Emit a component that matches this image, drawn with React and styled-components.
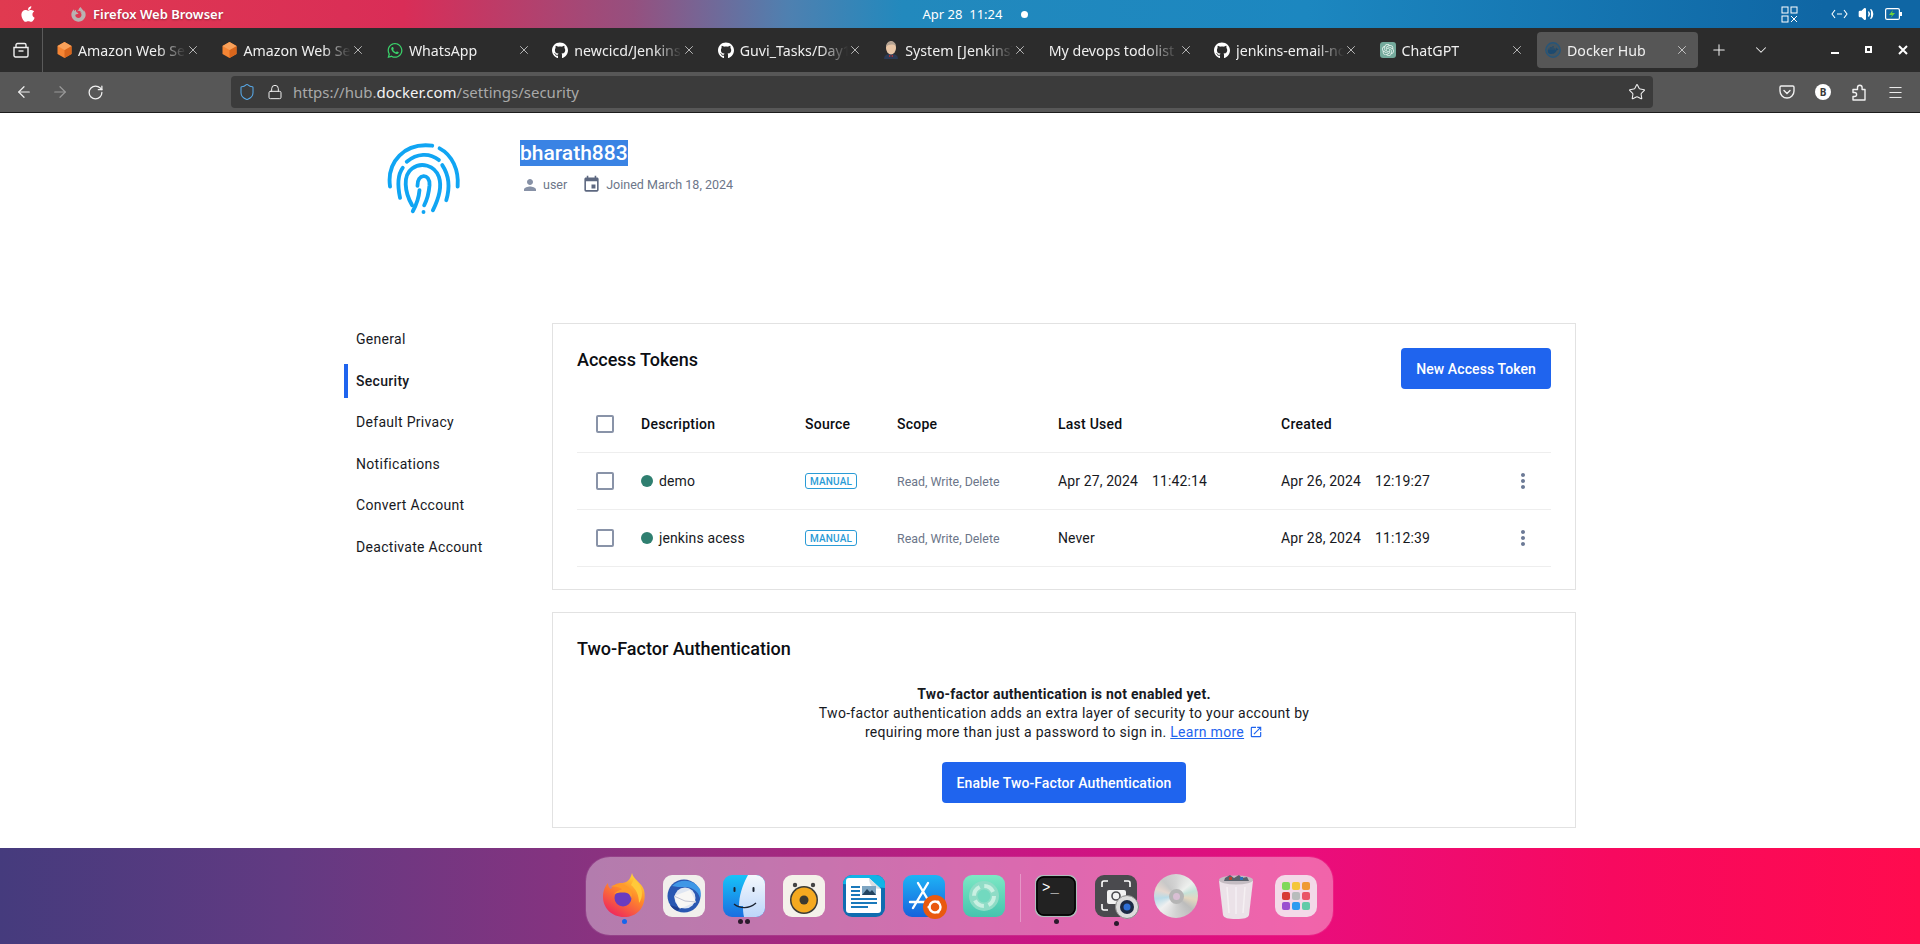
import React from "react";
import styled, { createGlobalStyle } from "styled-components";
import {
  ArrowLeft,
  ArrowRight,
  ChevronDown,
  Lock,
  Menu,
  Plus,
  RotateCw,
  Shield,
  Star,
  Volume2,
  X,
} from "lucide-react";
import { FaApple, FaFirefoxBrowser, FaGithub, FaWhatsapp } from "react-icons/fa";
import { MdEvent, MdMoreVert, MdOpenInNew, MdPerson } from "react-icons/md";
import { SiDocker, SiOpenai } from "react-icons/si";

const GlobalStyle = createGlobalStyle`
  html, body {
    margin: 0;
    padding: 0;
    height: 100%;
    overflow: hidden;
    background: #fff;
  }
  * { box-sizing: border-box; }
`;

const Screen = styled.div`
  width: 1920px;
  height: 944px;
  display: flex;
  flex-direction: column;
  overflow: hidden;
  font-family: Roboto, "Liberation Sans", sans-serif;
  color: #17191e;
`;

/* desktop top bar */
const TopBar = styled.div`
  height: 28px;
  flex: none;
  display: grid;
  grid-template-columns: 1fr auto 1fr;
  align-items: center;
  padding: 0 18px 0 19px;
  color: #fff;
  font-family: "Noto Sans", sans-serif;
  font-size: 13px;
  background: linear-gradient(
    90deg,
    #e03a50 0%,
    #d92d57 21%,
    #95507f 33%,
    #4f80b0 41%,
    #2289bd 47%,
    #1c87c0 68%,
    #0f66a4 95%
  );
`;

const TopLeft = styled.div`
  display: flex;
  align-items: center;
`;

const AppName = styled.span`
  margin-left: 7px;
  font-weight: 600;
  font-size: 13px;
  text-shadow: 0 1px 2px rgba(0, 0, 0, 0.3);
`;

const Clock = styled.div`
  display: flex;
  align-items: center;
  font-size: 13px;
  gap: 19px;
  margin-left: 30px;
`;

const ClockDot = styled.span`
  width: 7px;
  height: 7px;
  border-radius: 50%;
  background: #fff;
`;

const Tray = styled.div`
  display: flex;
  align-items: center;
  justify-content: flex-end;
`;

const TrayIcon = styled.span`
  display: flex;
  margin-left: ${(props) => props.$left || 0}px;
`;

/* tab strip */
const TabStrip = styled.div`
  height: 44px;
  flex: none;
  background: #2c2c2c;
  display: flex;
  align-items: center;
  color: #f0f0f0;
  font-family: "Noto Sans", sans-serif;
`;

const ViewButton = styled.div`
  width: 43px;
  height: 44px;
  flex: none;
  display: flex;
  align-items: center;
  justify-content: center;
  border-right: 1px solid #5a5a5a;
`;

const Tabs = styled.div`
  display: flex;
  gap: 4.44px;
  padding-left: 5px;
`;

const Tab = styled.div`
  width: 161px;
  height: 36px;
  flex: none;
  display: flex;
  align-items: center;
  padding: 0 9px 0 8px;
  border-radius: 4px;
  background: ${(props) => (props.$active ? "#565656" : "transparent")};
`;

const TabIcon = styled.span`
  width: 16px;
  height: 18px;
  flex: none;
  display: flex;
  align-items: center;
  justify-content: center;
  margin-right: 6px;
`;

const TabTitle = styled.span`
  flex: 1;
  min-width: 0;
  overflow: hidden;
  white-space: nowrap;
  font-size: 14.2px;
  -webkit-mask-image: linear-gradient(90deg, #000 74%, transparent 100%);
  mask-image: linear-gradient(90deg, #000 74%, transparent 100%);
`;

const StripButton = styled.span`
  display: flex;
  margin-left: ${(props) => props.$left}px;
`;

const WindowButtons = styled.div`
  margin-left: auto;
  display: flex;
  align-items: center;
  gap: 22px;
  padding-right: 11px;
`;

/* navigation bar */
const NavBar = styled.div`
  height: 41px;
  flex: none;
  background: #575757;
  border-bottom: 1px solid #1c1c1c;
  display: flex;
  align-items: center;
  color: #f0f0f0;
  font-family: "Noto Sans", sans-serif;
`;

const NavButtons = styled.div`
  width: 231px;
  flex: none;
  display: flex;
  align-items: center;
  gap: 18px;
  padding-left: 15px;
`;

const UrlBox = styled.div`
  width: 1422px;
  height: 32px;
  flex: none;
  background: #3b3b3b;
  border-radius: 4px;
  display: flex;
  align-items: center;
  padding: 0 7px 0 7px;
  font-size: 15px;
  color: #a9a9a9;
`;

const UrlHost = styled.span`
  color: #f4f4f4;
`;

const UrlText = styled.div`
  flex: 1;
  margin-left: 10px;
`;

const NavRight = styled.div`
  flex: 1;
  display: flex;
  align-items: center;
  justify-content: flex-end;
  gap: 20px;
  padding-right: 16px;
`;

const Avatar = styled.span`
  width: 16px;
  height: 16px;
  border-radius: 50%;
  background: #fff;
  color: #3a3a3a;
  font-size: 10px;
  font-weight: 700;
  display: flex;
  align-items: center;
  justify-content: center;
`;

/* page */
const Main = styled.main`
  height: 735px;
  flex: none;
  background: #fff;
  overflow: hidden;
`;

const Container = styled.div`
  width: 1232px;
  margin: 0 auto;
`;

const Profile = styled.header`
  height: 210px;
  display: flex;
  align-items: flex-start;
  padding: 27px 0 0 44px;
  gap: 57px;
`;

const ProfileText = styled.div`
  display: flex;
  flex-direction: column;
  align-items: flex-start;
`;

const UserName = styled.h1`
  margin: 0;
  font-size: 21px;
  line-height: 26px;
  font-weight: 500;
  background: #3a83e4;
  color: #fff;
`;

const MetaRow = styled.div`
  margin-top: 9px;
  display: flex;
  align-items: center;
  font-size: 12.5px;
  color: #6c7689;
`;

const MetaItem = styled.span`
  display: flex;
  align-items: center;
  gap: ${(props) => props.$gap}px;
  margin-right: 15px;
  margin-left: ${(props) => props.$left || 0}px;
`;

const Columns = styled.div`
  display: grid;
  grid-template-columns: 208px 1024px;
`;

const SideNav = styled.nav`
  display: flex;
  flex-direction: column;
  gap: 7.6px;
  margin-top: -1px;
`;

const SideItem = styled.div`
  height: 34px;
  display: flex;
  align-items: center;
  padding-left: ${(props) => (props.$active ? 8 : 12)}px;
  border-left: ${(props) => (props.$active ? "4px solid #1f64ee" : "none")};
  font-size: 14px;
  letter-spacing: 0.3px;
  font-weight: ${(props) => (props.$active ? 500 : 400)};
`;

const Cards = styled.div`
  display: flex;
  flex-direction: column;
  gap: 22px;
`;

const Card = styled.section`
  border: 1px solid #e2e2e2;
  padding: ${(props) => props.$padding};
`;

const CardHead = styled.div`
  display: flex;
  justify-content: space-between;
  align-items: flex-start;
`;

const CardTitle = styled.h2`
  margin: 0;
  font-size: 18px;
  line-height: 24px;
  font-weight: 500;
  color: #0b0d12;
`;

const BlueButton = styled.button`
  height: 41px;
  padding: 0 15px;
  border: none;
  border-radius: 4px;
  background: #1f64ee;
  color: #fff;
  font-family: Roboto, sans-serif;
  font-size: 14px;
  font-weight: 500;
  letter-spacing: 0.1px;
`;

const Row = styled.div`
  height: 57px;
  display: grid;
  grid-template-columns: 45px 164px 92px 161px 223px 1fr 56px;
  align-items: center;
  padding-left: 19px;
  border-bottom: 1px solid #eeeeee;
  font-size: 14px;
  letter-spacing: ${(props) => (props.$head ? 0.25 : 0.12)}px;
  font-weight: ${(props) => (props.$head ? 500 : 400)};
  color: ${(props) => (props.$head ? "#0b0d12" : "#17191e")};
`;

const TableHead = styled.div`
  margin-top: 7px;
`;

const Check = styled.span`
  width: 18px;
  height: 18px;
  border: 2px solid #8993a8;
  border-radius: 2px;
`;

const TokenName = styled.span`
  display: flex;
  align-items: center;
  gap: 6px;
`;

const StatusDot = styled.span`
  width: 12px;
  height: 12px;
  border-radius: 50%;
  background: #2f7f70;
`;

const Badge = styled.span`
  width: 52px;
  height: 16px;
  border: 1px solid #2a9bd6;
  border-radius: 3px;
  color: #2a9bd6;
  font-size: 10px;
  font-weight: 500;
  letter-spacing: 0.2px;
  display: flex;
  align-items: center;
  justify-content: center;
`;

const Scope = styled.span`
  font-size: 12.4px;
  letter-spacing: 0;
  color: #6c7689;
`;

const Stamp = styled.span`
  display: flex;
  gap: 14px;
`;

const Kebab = styled.span`
  display: flex;
  justify-content: center;
  color: #6c7a96;
`;

const TwoFactor = styled.div`
  margin-top: 24px;
  display: flex;
  flex-direction: column;
  align-items: center;
  text-align: center;
  font-size: 14px;
  line-height: 19px;
  letter-spacing: 0.3px;
`;

const Strong = styled.strong`
  font-weight: 700;
  letter-spacing: 0.25px;
`;

const LearnMore = styled.a`
  color: #1f64ee;
  text-decoration: underline;
`;

const EnableWrap = styled.div`
  margin-top: 20px;
`;

const ExternalIcon = styled(MdOpenInNew)`
  margin-left: 5px;
  vertical-align: -2px;
  color: #1f64ee;
`;

/* wallpaper and dock */
const Wallpaper = styled.footer`
  height: 96px;
  flex: none;
  padding: 9px 0 0 586px;
  background: linear-gradient(
    90deg,
    #453b7d 0%,
    #623a82 15%,
    #93307f 35%,
    #c91583 54%,
    #e90d7c 68%,
    #f7095f 84%,
    #ff0b4e 100%
  );
`;

const Dock = styled.div`
  width: 747px;
  height: 78px;
  display: flex;
  gap: 18px;
  padding: 18px 0 0 17px;
  border-radius: 24px;
  background: rgba(255, 255, 255, 0.36);
  box-shadow: 0 0 0 1px rgba(255, 255, 255, 0.08);
`;

const DockItem = styled.div`
  width: 42px;
  display: flex;
  flex-direction: column;
  align-items: center;
`;

const DockDots = styled.div`
  height: 6px;
  margin-top: 2px;
  display: flex;
  gap: 2px;
`;

const DockDot = styled.span`
  width: 5px;
  height: 5px;
  border-radius: 50%;
  background: ${(props) => (props.$blue ? "#1665ec" : "#2b1a2c")};
`;

const DockDivider = styled.div`
  width: 1px;
  height: 48px;
  margin: -1px -4px 0 -3px;
  background: rgba(255, 255, 255, 0.3);
`;

const CdIcon = styled.div`
  width: 44px;
  height: 44px;
  margin: -1px;
  border-radius: 50%;
  display: flex;
  align-items: center;
  justify-content: center;
  background: conic-gradient(
    #d4d4d4 0deg,
    #eef0ee 50deg,
    #c5e2d8 75deg,
    #e4d8c0 100deg,
    #bcbcbc 130deg,
    #d2d2d2 180deg,
    #f0f0f0 230deg,
    #b9dbe8 262deg,
    #e6d8d0 290deg,
    #c8c8c8 320deg,
    #d4d4d4 360deg
  );
`;

const CdHole = styled.div`
  width: 15px;
  height: 15px;
  border-radius: 50%;
  background: #d9bfd4;
  border: 4px solid #b5b5b5;
`;

const LaunchIcon = styled.div`
  width: 42px;
  height: 42px;
  padding: 7px;
  border-radius: 10px;
  background: #f3d9e8;
  display: grid;
  grid-template-columns: repeat(3, 1fr);
  gap: 2px;
`;

const LaunchCell = styled.span`
  border-radius: 2px;
  background: ${(props) => props.$color};
`;

/* drawn icons */
const CubeIcon = () => (
  <svg width="15" height="16" viewBox="0 0 14 16">
    <path d="M7 0l7 4v8l-7 4-7-4V4z" fill="#f58534" />
    <path d="M7 8l7-4v8l-7 4z" fill="#d9661c" />
    <path d="M7 0l7 4-7 4-7-4z" fill="#f9a15a" />
  </svg>
);

const JenkinsIcon = () => (
  <svg width="16" height="18" viewBox="0 0 16 18">
    <path d="M1 18c0-4 3-5 7-5s7 1 7 5z" fill="#2b3a55" />
    <ellipse cx="8" cy="7" rx="5" ry="6.5" fill="#e9c6a6" />
    <path d="M3 6c0-4 3-6 5-6s5 2 5 5c-3-2-7-2-10 1z" fill="#b4a292" />
    <path d="M6 14l2 1 2-1v2l-2-1-2 1z" fill="#c8302c" />
  </svg>
);

const ChatIcon = () => (
  <svg width="16" height="16" viewBox="0 0 16 16">
    <rect width="16" height="16" rx="3" fill="#74aa9c" />
    <SiOpenai x="2" y="2" size={12} color="#e7f3ee" />
  </svg>
);

const DockerTabIcon = () => (
  <svg width="16" height="16" viewBox="0 0 16 16">
    <circle cx="8" cy="8" r="7.2" fill="#45555f" stroke="#27567a" strokeWidth="1.4" />
    <SiDocker x="2.5" y="2.5" size={11} color="#1c4a70" />
  </svg>
);

const ViewIcon = () => (
  <svg width="16" height="16" viewBox="0 0 16 16" fill="none" stroke="#f0f0f0" strokeWidth="1.4">
    <path d="M1 5.5h14v8a1.5 1.5 0 0 1-1.5 1.5h-11A1.5 1.5 0 0 1 1 13.5z" />
    <path d="M3 5.5V3a1.5 1.5 0 0 1 1.5-1.5h7A1.5 1.5 0 0 1 13 3v2.5" />
    <path d="M5.5 9h5" />
  </svg>
);

const MinimizeIcon = () => (
  <svg width="12" height="12" viewBox="0 0 12 12">
    <rect x="2" y="8" width="8" height="2" fill="#fff" />
  </svg>
);

const MaximizeIcon = () => (
  <svg width="12" height="12" viewBox="0 0 12 12" fill="none" stroke="#fff" strokeWidth="2">
    <rect x="3" y="3" width="5" height="5" />
  </svg>
);

const CloseIcon = () => (
  <svg width="12" height="12" viewBox="0 0 12 12" fill="none" stroke="#fff" strokeWidth="2">
    <path d="M2 2l8 8M10 2l-8 8" />
  </svg>
);

const GridTrayIcon = () => (
  <svg width="17" height="17" viewBox="0 0 17 17" fill="none" stroke="#fff" strokeWidth="1">
    <rect x="1" y="1" width="6" height="6" />
    <rect x="10" y="1" width="6" height="6" />
    <rect x="1" y="10" width="6" height="6" />
    <path d="M10 10l6 6M16 10l-6 6" />
  </svg>
);

const LinkTrayIcon = () => (
  <svg width="17" height="12" viewBox="0 0 17 12" fill="none" stroke="#fff" strokeWidth="1.1">
    <path d="M4 2L1 6l3 4M13 2l3 4-3 4M6 6h5" />
  </svg>
);

const BatteryIcon = () => (
  <svg width="17" height="12" viewBox="0 0 17 12">
    <rect x="0.6" y="0.6" width="13.8" height="10.8" rx="1.5" fill="none" stroke="#fff" strokeWidth="1.2" />
    <rect x="15" y="4" width="2" height="4" fill="#fff" />
    <path d="M8 2L4 7h3L5.5 10 10 5H7z" fill="#6fd33b" />
  </svg>
);

const PocketIcon = () => (
  <svg width="16" height="16" viewBox="0 0 16 16" fill="none" stroke="#f0f0f0" strokeWidth="1.4">
    <path d="M2.2 2h11.6c.7 0 1.2.5 1.2 1.2V7A7 7 0 0 1 1 7V3.2C1 2.5 1.5 2 2.2 2z" />
    <path d="M5 6.5l3 3 3-3" strokeLinecap="round" />
  </svg>
);

const ExtensionIcon = () => (
  <svg width="16" height="17" viewBox="0 0 16 17" fill="none" stroke="#f0f0f0" strokeWidth="1.4" strokeLinejoin="round">
    <path d="M2 5.5h4.5V3.5a2.3 2.3 0 0 1 4.6 0v2H14v10.5H2v-3.5h1.6a2 2 0 0 0 0-4H2z" />
  </svg>
);

const FingerprintArt = () => (
  <svg width="77" height="77" viewBox="170 75 230 230" fill="none" stroke="#10a5f3" strokeWidth="11.5" strokeLinecap="round" style={{ marginLeft: -2 }}>
    <path d="M182 214C172 140 225 82 308 92" />
    <path d="M330 100C368 120 388 165 384 214" />
    <path d="M232 140C262 115 300 112 328 135" />
    <path d="M220 158C205 178 205 215 212 248" />
    <path d="M338 150C358 180 362 215 350 255" />
    <path d="M248 270C225 230 220 180 248 160C275 140 315 150 328 185C338 215 325 255 310 285" />
    <path d="M264 212C262 175 302 172 300 210C298 235 292 255 284 270" />
    <path d="M270 225C268 250 260 270 250 288" />
    <path d="M282 290h.1" />
  </svg>
);

const FirefoxDock = () => (
  <svg width="42" height="44" viewBox="0 0 42 44" style={{ marginTop: -2 }}>
    <defs>
      <linearGradient id="ffA" x1="0.8" y1="0" x2="0.2" y2="1">
        <stop offset="0" stopColor="#ffe03a" />
        <stop offset="0.42" stopColor="#ff8a2a" />
        <stop offset="1" stopColor="#ee2060" />
      </linearGradient>
    </defs>
    <path d="M29 0c1 6 10 10 12 17 3 13-4 27-20 27C9 44 0 35 0 24c0-6 2-11 5-14 0 3 1 5 3 6 2-4 6-6 10-6 5 0 9-2 11-10z" fill="url(#ffA)" />
    <circle cx="20" cy="25" r="8.5" fill="#6a3cc0" />
    <path d="M7 14c5-1 9 0 12 2-4 1-6 3-8 5 3-1 8-2 13-1 3 1 4 4 4 6 2-4 1-9-3-12-5-4-13-3-18 0z" fill="#ff9a2a" />
    <path d="M31 6c4 3 8 8 8 14 0 4-1 7-3 10 0-8-3-14-8-18z" fill="#ffc93a" />
  </svg>
);

const ThunderbirdDock = () => (
  <svg width="42" height="42" viewBox="0 0 42 42">
    <rect width="42" height="42" rx="9" fill="#f1efec" />
    <circle cx="21" cy="21" r="16.5" fill="#2a58b2" />
    <path d="M9 11c8-8 22-7 28 3 1 3 1 6 0 9-2-7-8-11-15-11-5 0-9 0-13-1z" fill="#3f97e6" />
    <circle cx="22" cy="23" r="10.5" fill="#dfe6f2" />
    <path d="M11 21l16-6 6 12-17 7z" fill="#f8f7f5" />
    <path d="M11 21l11 5 11 1" fill="none" stroke="#c2c4d2" strokeWidth="1" />
    <path d="M7 30c2 3 5 5 8 6l2-3c-4-1-7-2-10-3z" fill="#1f3f8f" />
  </svg>
);

const FinderDock = () => (
  <svg width="42" height="42" viewBox="0 0 42 42">
    <defs>
      <linearGradient id="fnL" x1="0" y1="0" x2="0" y2="1">
        <stop offset="0" stopColor="#17c3f8" />
        <stop offset="1" stopColor="#1a6ee0" />
      </linearGradient>
      <linearGradient id="fnR" x1="0" y1="0" x2="0" y2="1">
        <stop offset="0" stopColor="#f4f8fd" />
        <stop offset="1" stopColor="#bcd6fa" />
      </linearGradient>
    </defs>
    <rect width="42" height="42" rx="9" fill="url(#fnL)" />
    <path d="M25 0h8a9 9 0 0 1 9 9v24a9 9 0 0 1-9 9H21c-1-4-1-8-1-11h-4c0-10 3-20 9-31z" fill="url(#fnR)" />
    <path d="M11 29c6 5 15 5 22-1" fill="none" stroke="#1a2230" strokeWidth="1.4" />
    <rect x="10.5" y="12" width="2" height="5" rx="1" fill="#1a2230" />
    <rect x="29.5" y="12" width="2" height="5" rx="1" fill="#1a2230" />
  </svg>
);

const RhythmboxDock = () => (
  <svg width="42" height="42" viewBox="0 0 42 42">
    <rect width="42" height="42" rx="9" fill="#f4f1ea" />
    <circle cx="12" cy="10" r="2.2" fill="#444" />
    <circle cx="30" cy="10" r="2.2" fill="#444" />
    <circle cx="21" cy="25" r="14" fill="#3a3a36" />
    <circle cx="21" cy="25" r="12.5" fill="#f5a920" />
    <circle cx="21" cy="25" r="4.5" fill="#3c3a30" />
  </svg>
);

const NewsDock = () => (
  <svg width="42" height="42" viewBox="0 0 42 42">
    <rect width="42" height="42" rx="9" fill="#0f6cb0" />
    <path d="M0 9a9 9 0 0 1 9-9h24a9 9 0 0 1 9 9v4z" fill="#12b3e6" />
    <path d="M3 6a3 3 0 0 1 3-3h20l12 11v21a3 3 0 0 1-3 3H6a3 3 0 0 1-3-3z" fill="#fff" />
    <path d="M26 3l12 11c-7 0-12-3-12-11z" fill="#d9dee2" />
    <rect x="8" y="11" width="9" height="2" fill="#1a79bb" />
    <rect x="8" y="15" width="9" height="2" fill="#1a79bb" />
    <rect x="8" y="19" width="9" height="2" fill="#1a79bb" />
    <rect x="19" y="11" width="14" height="9" fill="#7ea5c2" />
    <path d="M19 20l5-6 3 3 2-2 4 5z" fill="#24445f" />
    <rect x="8" y="23" width="26" height="2" fill="#1a79bb" />
    <rect x="8" y="27" width="26" height="2" fill="#1a79bb" />
    <rect x="8" y="31" width="17" height="2" fill="#1a79bb" />
  </svg>
);

const AppStoreDock = () => (
  <svg width="44" height="44" viewBox="0 0 44 44" style={{ marginRight: -2 }}>
    <defs>
      <linearGradient id="asB" x1="0" y1="0" x2="0" y2="1">
        <stop offset="0" stopColor="#1eb3f5" />
        <stop offset="1" stopColor="#1762dc" />
      </linearGradient>
    </defs>
    <rect width="42" height="42" rx="9" fill="url(#asB)" />
    <path d="M15 8l13 22M25 8L10 33M7 27h22" fill="none" stroke="#fff" strokeWidth="2.4" strokeLinecap="round" />
    <circle cx="32" cy="32" r="12" fill="#e9590f" />
    <circle cx="32" cy="32" r="5.5" fill="none" stroke="#fff" strokeWidth="2.4" />
    <circle cx="26" cy="32" r="1.6" fill="#fff" />
    <circle cx="35" cy="27" r="1.6" fill="#fff" />
    <circle cx="35" cy="37" r="1.6" fill="#fff" />
  </svg>
);

const RingDock = () => (
  <svg width="42" height="42" viewBox="0 0 42 42">
    <defs>
      <linearGradient id="rgB" x1="0" y1="0" x2="0" y2="1">
        <stop offset="0" stopColor="#7de8c4" />
        <stop offset="1" stopColor="#45c4ae" />
      </linearGradient>
    </defs>
    <rect width="42" height="42" rx="9" fill="url(#rgB)" />
    <circle cx="21" cy="21" r="15" fill="#8fdcc6" />
    <circle cx="21" cy="21" r="10" fill="none" stroke="#c9f0e2" strokeWidth="4" strokeDasharray="11 4.7" />
    <circle cx="21" cy="21" r="6.5" fill="#72d9bf" />
  </svg>
);

const PromptText = styled.text`
  font-family: "Liberation Mono", monospace;
  font-size: 14px;
  fill: #fff;
`;

const TerminalDock = () => (
  <svg width="42" height="42" viewBox="0 0 42 42">
    <rect x="0.5" y="0.5" width="41" height="41" rx="8" fill="#111" stroke="#aebcbc" strokeWidth="1.4" />
    <rect x="2" y="2" width="38" height="38" rx="7" fill="#222" stroke="#000" strokeWidth="1.4" />
    <PromptText x="7" y="17">&gt;_</PromptText>
  </svg>
);

const ScreenshotDock = () => (
  <svg width="44" height="44" viewBox="0 0 44 44" style={{ marginRight: -2 }}>
    <rect width="42" height="42" rx="9" fill="#4a4a4e" />
    <path d="M7 12V8a2 2 0 0 1 2-2h4M29 6h4a2 2 0 0 1 2 2v4M7 29v4a2 2 0 0 0 2 2h4" fill="none" stroke="#fff" strokeWidth="1.6" />
    <rect x="12" y="15" width="19" height="14" rx="2" fill="#f2f2f2" />
    <circle cx="21" cy="21" r="4" fill="none" stroke="#4a4a4e" strokeWidth="1.6" />
    <circle cx="32" cy="32" r="11.5" fill="#dcdcdc" stroke="#8a8a8a" />
    <circle cx="32" cy="32" r="7" fill="#1d2a44" />
    <circle cx="32" cy="32" r="3.5" fill="#2f6fd6" />
  </svg>
);

const TrashDock = () => (
  <svg width="36" height="46" viewBox="0 0 36 46" style={{ marginTop: -2 }}>
    <path d="M1 8c5-3 29-3 34 0l-4 34c-1 3-5 4-13 4s-12-1-13-4z" fill="#ebe2e8" />
    <ellipse cx="18" cy="7" rx="17" ry="4.5" fill="#c4bcc2" />
    <path d="M7 5l5-3 4 3 5-3 3 3 5-1 2 4H6z" fill="#59606a" />
    <rect x="11" y="4" width="3" height="3" fill="#b8402f" />
    <rect x="22" y="4" width="3" height="3" fill="#2f6fb8" />
    <path d="M9 14l2 26M18 14v27M27 14l-2 26" stroke="#f5f0f3" strokeWidth="1.5" />
  </svg>
);

const tabs = [
  { title: "Amazon Web Services", icon: <CubeIcon /> },
  { title: "Amazon Web Services", icon: <CubeIcon /> },
  { title: "WhatsApp", icon: <FaWhatsapp size={17} color="#3ad16a" /> },
  { title: "newcicd/Jenkins", icon: <FaGithub size={17} color="#fff" /> },
  { title: "Guvi_Tasks/Day14", icon: <FaGithub size={17} color="#fff" /> },
  { title: "System [Jenkins]", icon: <JenkinsIcon /> },
  { title: "My devops todolist", noIcon: true },
  { title: "jenkins-email-notification", icon: <FaGithub size={17} color="#fff" /> },
  { title: "ChatGPT", icon: <ChatIcon /> },
  { title: "Docker Hub", icon: <DockerTabIcon />, active: true },
];

const sections = ["General", "Security", "Default Privacy", "Notifications", "Convert Account", "Deactivate Account"];

const tokens = [
  { name: "demo", lastDate: "Apr 27, 2024", lastTime: "11:42:14", date: "Apr 26, 2024", time: "12:19:27" },
  { name: "jenkins acess", lastDate: "Never", date: "Apr 28, 2024", time: "11:12:39" },
];

const launchColors = ["#7fd85a", "#f5c63c", "#ef9a35", "#d83a35", "#b9bcbc", "#ea5468", "#9a4fd0", "#2f9bf0", "#62cba8"];

const App = () => (
  <Screen>
    <GlobalStyle />
    <TopBar>
      <TopLeft>
        <FaApple size={18} />
        <StripButton $left={34}>
          <FaFirefoxBrowser size={15} color="#b9b2b2" />
        </StripButton>
        <AppName>Firefox Web Browser</AppName>
      </TopLeft>
      <Clock>
        <span>Apr 28&nbsp;&nbsp;11:24</span>
        <ClockDot />
      </Clock>
      <Tray>
        <TrayIcon>
          <GridTrayIcon />
        </TrayIcon>
        <TrayIcon $left={33}>
          <LinkTrayIcon />
        </TrayIcon>
        <TrayIcon $left={10}>
          <Volume2 size={16} fill="#fff" />
        </TrayIcon>
        <TrayIcon $left={11}>
          <BatteryIcon />
        </TrayIcon>
      </Tray>
    </TopBar>

    <TabStrip>
      <ViewButton>
        <ViewIcon />
      </ViewButton>
      <Tabs>
        {tabs.map((tab, i) => (
          <Tab key={i} $active={tab.active}>
            {!tab.noIcon && <TabIcon>{tab.icon}</TabIcon>}
            <TabTitle>{tab.title}</TabTitle>
            <X size={14} strokeWidth={1.2} />
          </Tab>
        ))}
      </Tabs>
      <StripButton $left={12}>
        <Plus size={18} strokeWidth={1.4} />
      </StripButton>
      <StripButton $left={24}>
        <ChevronDown size={18} strokeWidth={1.4} />
      </StripButton>
      <WindowButtons>
        <MinimizeIcon />
        <MaximizeIcon />
        <CloseIcon />
      </WindowButtons>
    </TabStrip>

    <NavBar>
      <NavButtons>
        <ArrowLeft size={18} strokeWidth={1.6} />
        <ArrowRight size={18} strokeWidth={1.6} color="#9a9a9a" />
        <RotateCw size={17} strokeWidth={1.8} />
      </NavButtons>
      <UrlBox>
        <Shield size={18} strokeWidth={1.4} color="#58a9e8" />
        <StripButton $left={11}>
          <Lock size={16} strokeWidth={1.5} color="#f0f0f0" />
        </StripButton>
        <UrlText>
          https://hub.<UrlHost>docker.com</UrlHost>/settings/security
        </UrlText>
        <Star size={18} strokeWidth={1.4} color="#f0f0f0" />
      </UrlBox>
      <NavRight>
        <PocketIcon />
        <Avatar>B</Avatar>
        <ExtensionIcon />
        <Menu size={17} strokeWidth={1.4} />
      </NavRight>
    </NavBar>

    <Main>
      <Container>
        <Profile>
          <FingerprintArt />
          <ProfileText>
            <UserName>bharath883</UserName>
            <MetaRow>
              <MetaItem $gap={4} $left={1}>
                <MdPerson size={18} color="#8791a6" />
                user
              </MetaItem>
              <MetaItem $gap={5}>
                <MdEvent size={19} color="#5d6880" />
                Joined March 18, 2024
              </MetaItem>
            </MetaRow>
          </ProfileText>
        </Profile>

        <Columns>
          <SideNav>
            {sections.map((name) => (
              <SideItem key={name} $active={name === "Security"}>
                {name}
              </SideItem>
            ))}
          </SideNav>
          <Cards>
            <Card $padding="24px 24px 22px 24px">
              <CardHead>
                <CardTitle>Access Tokens</CardTitle>
                <BlueButton>New Access Token</BlueButton>
              </CardHead>
              <TableHead>
                <Row $head>
                  <Check />
                  <span>Description</span>
                  <span>Source</span>
                  <span>Scope</span>
                  <span>Last Used</span>
                  <span>Created</span>
                </Row>
              </TableHead>
              {tokens.map((token) => (
                <Row key={token.name}>
                  <Check />
                  <TokenName>
                    <StatusDot />
                    {token.name}
                  </TokenName>
                  <Badge>MANUAL</Badge>
                  <Scope>Read, Write, Delete</Scope>
                  <Stamp>
                    <span>{token.lastDate}</span>
                    {token.lastTime && <span>{token.lastTime}</span>}
                  </Stamp>
                  <Stamp>
                    <span>{token.date}</span>
                    <span>{token.time}</span>
                  </Stamp>
                  <Kebab>
                    <MdMoreVert size={24} />
                  </Kebab>
                </Row>
              ))}
            </Card>

            <Card $padding="24px 24px 24px 24px">
              <CardTitle>Two-Factor Authentication</CardTitle>
              <TwoFactor>
                <Strong>Two-factor authentication is not enabled yet.</Strong>
                <span>Two-factor authentication adds an extra layer of security to your account by</span>
                <span>
                  requiring more than just a password to sign in. <LearnMore>Learn more</LearnMore>
                  <ExternalIcon size={14} />
                </span>
                <EnableWrap>
                  <BlueButton>Enable Two-Factor Authentication</BlueButton>
                </EnableWrap>
              </TwoFactor>
            </Card>
          </Cards>
        </Columns>
      </Container>
    </Main>

    <Wallpaper>
      <Dock>
        <DockItem>
          <FirefoxDock />
          <DockDots>
            <DockDot $blue />
          </DockDots>
        </DockItem>
        <DockItem>
          <ThunderbirdDock />
        </DockItem>
        <DockItem>
          <FinderDock />
          <DockDots>
            <DockDot />
            <DockDot />
          </DockDots>
        </DockItem>
        <DockItem>
          <RhythmboxDock />
        </DockItem>
        <DockItem>
          <NewsDock />
        </DockItem>
        <DockItem>
          <AppStoreDock />
        </DockItem>
        <DockItem>
          <RingDock />
        </DockItem>
        <DockDivider />
        <DockItem>
          <TerminalDock />
          <DockDots>
            <DockDot />
          </DockDots>
        </DockItem>
        <DockItem>
          <ScreenshotDock />
          <DockDots>
            <DockDot />
          </DockDots>
        </DockItem>
        <DockItem>
          <CdIcon>
            <CdHole />
          </CdIcon>
        </DockItem>
        <DockItem>
          <TrashDock />
        </DockItem>
        <DockItem>
          <LaunchIcon>
            {launchColors.map((color) => (
              <LaunchCell key={color} $color={color} />
            ))}
          </LaunchIcon>
        </DockItem>
      </Dock>
    </Wallpaper>
  </Screen>
);

export default App;
